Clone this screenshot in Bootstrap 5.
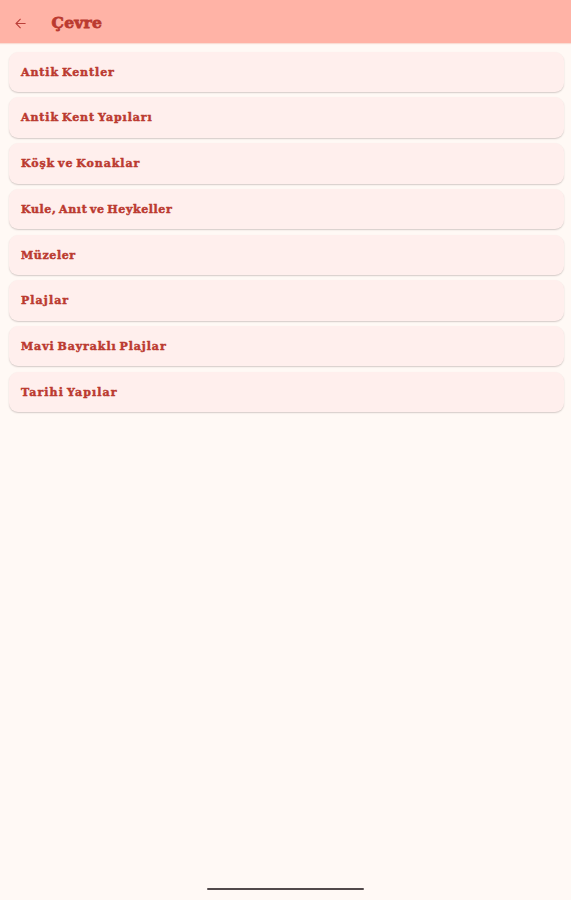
<!DOCTYPE html>
<html lang="tr">
<head>
<meta charset="utf-8">
<meta name="viewport" content="width=device-width, initial-scale=1">
<title>Çevre</title>
<link href="https://cdn.jsdelivr.net/npm/bootstrap@5.3.0/dist/css/bootstrap.min.css" rel="stylesheet">
<style>
body{background:#fff9f5;color:#bb3a30;font-family:"DejaVu Serif",serif;height:900px;overflow:hidden}
.topbar{height:42.5px;background:#ffb3a6;padding:4px 0 0 15px;box-shadow:0 1px 1px #f9ddd4}
.back-btn{width:11px;height:11px;color:#bb3f39}
.page-title{font-size:15.5px;line-height:20px;margin-left:25.5px;letter-spacing:.3px;-webkit-text-stroke:.8px}
.places{padding:9.3px 7.5px 0 8.5px;gap:5.2px}
.place{height:40.5px;border:0;border-radius:9px;background:#ffefed;box-shadow:0 1px 1.5px rgba(75,55,55,.24);padding:0 12.5px 2.6px}
.place span{font-size:11px;line-height:16px;letter-spacing:.92px;word-spacing:-1.8px;-webkit-text-stroke:.45px}
.place .fit-snug{letter-spacing:.62px}
.place .fit-wide{letter-spacing:1.08px}
.home-bar{width:157px;height:2.6px;background:#51494a;margin-bottom:9.7px;border-radius:1px}
</style>
<script src="https://cdn.jsdelivr.net/npm/bootstrap@5.3.0/dist/js/bootstrap.bundle.min.js"></script>
</head>
<body class="d-flex flex-column">
<header class="topbar d-flex align-items-center flex-shrink-0">
<a href="#" class="back-btn d-flex" aria-label="Geri"><svg width="11" height="11" viewBox="0 0 13 13" fill="none" stroke="currentColor" stroke-width="1.3"><path d="M12.5 6.5H1.4M6.6 1.1 1.2 6.5l5.4 5.4"/></svg></a>
<h1 class="page-title fw-bold mb-0"><span>Çevre</span></h1>
</header>
<main class="places d-flex flex-column">
<a href="#" class="place card justify-content-center text-reset text-decoration-none fw-bold"><div><span>Antik Kentler</span></div></a>
<a href="#" class="place card justify-content-center text-reset text-decoration-none fw-bold"><div><span>Antik Kent Yapıları</span></div></a>
<a href="#" class="place card justify-content-center text-reset text-decoration-none fw-bold"><div><span>Köşk ve Konaklar</span></div></a>
<a href="#" class="place card justify-content-center text-reset text-decoration-none fw-bold"><div><span class="fit-snug">Kule, Anıt ve Heykeller</span></div></a>
<a href="#" class="place card justify-content-center text-reset text-decoration-none fw-bold"><div><span class="fit-snug">Müzeler</span></div></a>
<a href="#" class="place card justify-content-center text-reset text-decoration-none fw-bold"><div><span class="fit-wide">Plajlar</span></div></a>
<a href="#" class="place card justify-content-center text-reset text-decoration-none fw-bold"><div><span>Mavi Bayraklı Plajlar</span></div></a>
<a href="#" class="place card justify-content-center text-reset text-decoration-none fw-bold"><div><span class="fit-wide">Tarihi Yapılar</span></div></a>
</main>
<div class="home-bar mt-auto mx-auto flex-shrink-0"></div>
</body>
</html>
